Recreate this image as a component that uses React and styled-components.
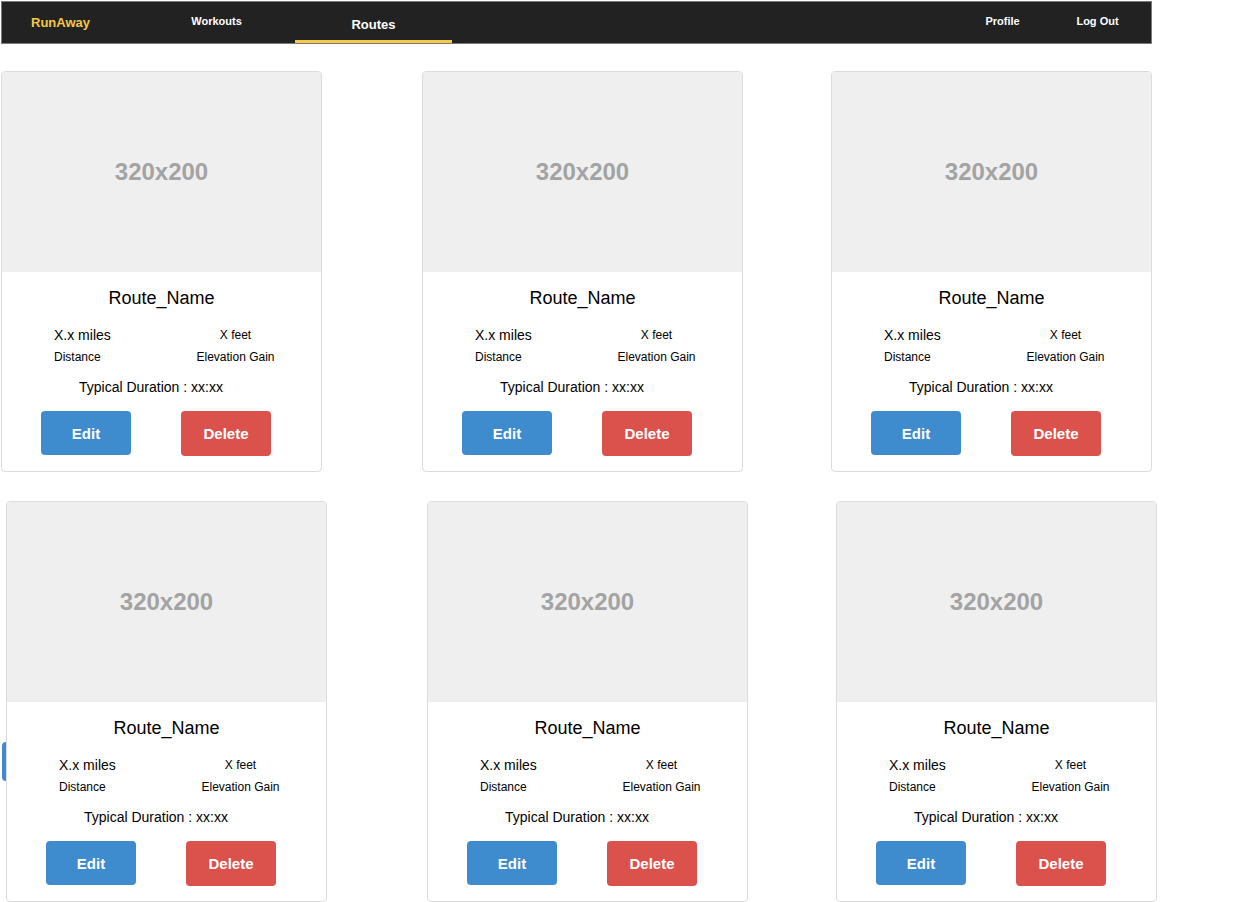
import styled, { createGlobalStyle } from "styled-components";

const GlobalStyle = createGlobalStyle`
  * {
    box-sizing: border-box;
  }

  body {
    margin: 0;
    background: #fff;
    font-family: "Liberation Sans", Arial, sans-serif;
    color: #000;
  }
`;

const Page = styled.div`
  position: relative;
  width: 1260px;
  min-height: 902px;
  overflow: hidden;
`;

const NavBarContainer = styled.header`
  display: flex;
  align-items: stretch;
  width: 1151px;
  height: 43px;
  margin: 1px 0 0 1px;
  background: #222;
  border: 1px solid #7a7a7a;
`;

const NavBrand = styled.div`
  width: 136px;
  padding-left: 29px;
  display: flex;
  align-items: center;
  color: #f4c84a;
  font-size: 13px;
  font-weight: 700;
  padding-bottom: 1px;
`;

const NavLink = styled.div`
  width: ${(p) => p.$width || 157}px;
  display: flex;
  align-items: center;
  justify-content: center;
  color: #fff;
  font-weight: 700;
  font-size: ${(p) => (p.$active ? 13 : 11)}px;
  padding-top: ${(p) => (p.$active ? 7 : 0)}px;
  border-bottom: 3px solid ${(p) => (p.$active ? "#f4c84a" : "transparent")};
`;

const NavSpacer = styled.div`
  flex: 1;
`;

const NavEnd = styled.div`
  width: 6px;
`;

const CardRow = styled.div`
  display: flex;
  padding-left: ${(p) => p.$offset}px;
  margin-top: ${(p) => p.$top}px;
`;

const Card = styled.div`
  position: relative;
  z-index: 1;
  width: 321px;
  height: 401px;
  margin-left: ${(p) => p.$gap || 0}px;
  background: #fff;
  border: 1px solid #dcdcdc;
  border-radius: 4px;
  overflow: hidden;
  display: flex;
  flex-direction: column;
`;

const Placeholder = styled.div`
  height: 200px;
  background: #efefef;
  display: flex;
  align-items: center;
  justify-content: center;
  color: #a3a3a3;
  font-size: 24px;
  font-weight: 700;
`;

const RouteName = styled.div`
  margin-top: 15px;
  text-align: center;
  font-size: 18px;
  line-height: 22px;
`;

const Stats = styled.div`
  display: grid;
  grid-template-columns: 150px 170px;
  margin-top: 17px;
`;

const Stat = styled.div`
  display: flex;
  flex-direction: column;
  align-items: ${(p) => (p.$center ? "center" : "flex-start")};
  padding-left: ${(p) => (p.$center ? 0 : 52)}px;
  padding-right: ${(p) => (p.$center ? 3 : 0)}px;
`;

const StatValue = styled.div`
  font-size: ${(p) => p.$size}px;
  line-height: 18px;
`;

const StatLabel = styled.div`
  font-size: 12px;
  line-height: 14px;
  margin-top: 6px;
`;

const Duration = styled.div`
  margin-top: 15px;
  padding-left: 77px;
  font-size: 14px;
  line-height: 16px;
`;

const Buttons = styled.div`
  display: flex;
  gap: 50px;
  padding-left: 39px;
  margin-top: 16px;
`;

const ActionButton = styled.button`
  width: 90px;
  height: ${(p) => (p.$danger ? 45 : 44)}px;
  border: 0;
  border-radius: 4px;
  background: ${(p) => (p.$danger ? "#db524d" : "#3e8bcd")};
  color: #fff;
  font-family: "Liberation Sans", Arial, sans-serif;
  font-size: 15px;
  font-weight: 700;
  cursor: pointer;
`;

const HiddenTab = styled.div`
  position: absolute;
  left: 2px;
  top: 742px;
  width: 24px;
  height: 39px;
  background: #3e8bcd;
  border-radius: 4px;
`;

function RouteCard({ gap }) {
  return (
    <Card $gap={gap}>
      <Placeholder>320x200</Placeholder>
      <RouteName>Route_Name</RouteName>
      <Stats>
        <Stat>
          <StatValue $size={14}>X.x miles</StatValue>
          <StatLabel>Distance</StatLabel>
        </Stat>
        <Stat $center>
          <StatValue $size={12}>X feet</StatValue>
          <StatLabel>Elevation Gain</StatLabel>
        </Stat>
      </Stats>
      <Duration>Typical Duration : xx:xx</Duration>
      <Buttons>
        <ActionButton>Edit</ActionButton>
        <ActionButton $danger>Delete</ActionButton>
      </Buttons>
    </Card>
  );
}

export default function App() {
  return (
    <Page>
      <GlobalStyle />
      <NavBarContainer>
        <NavBrand>RunAway</NavBrand>
        <NavLink>Workouts</NavLink>
        <NavLink $active>Routes</NavLink>
        <NavSpacer />
        <NavLink $width={95}>Profile</NavLink>
        <NavLink $width={95}>Log Out</NavLink>
        <NavEnd />
      </NavBarContainer>
      <CardRow $offset={1} $top={27}>
        <RouteCard />
        <RouteCard gap={100} />
        <RouteCard gap={88} />
      </CardRow>
      <CardRow $offset={6} $top={29}>
        <RouteCard />
        <RouteCard gap={100} />
        <RouteCard gap={88} />
      </CardRow>
      <HiddenTab />
    </Page>
  );
}
